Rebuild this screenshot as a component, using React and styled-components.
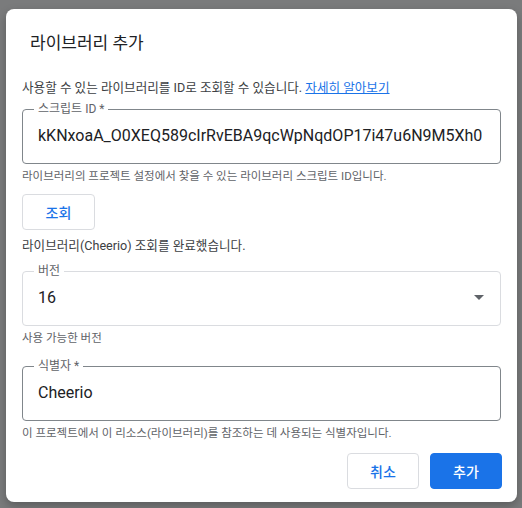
import { createGlobalStyle, styled } from 'styled-components';

const GlobalStyle = createGlobalStyle`
  html, body {
    margin: 0;
    background: #7a7b7c;
  }
  body {
    font-family: Roboto, "Noto Sans CJK KR", sans-serif;
    color: #202124;
  }
  * {
    box-sizing: border-box;
  }
`;

const Backdrop = styled.div`
  width: 522px;
  height: 508px;
  padding: 9px 5px 6px 6px;
`;

const Dialog = styled.div`
  width: 511px;
  height: 493px;
  background: #fff;
  border-radius: 8px;
  box-shadow: 0 4px 10px rgba(0, 0, 0, 0.25);
  padding: 22px 16px 12px;
  display: flex;
  flex-direction: column;
`;

const Title = styled.h2`
  margin: 0 0 25px 8px;
  font-size: 17px;
  line-height: 24px;
  font-weight: 400;
  color: #202124;
`;

const Text = styled.p`
  margin: ${({ $mt }) => $mt || 0}px 0 0;
  font-size: ${({ $size }) => $size || 12.6}px;
  line-height: 16px;
  color: ${({ $muted }) => ($muted ? '#5f6368' : '#3c4043')};
`;

const Link = styled.a`
  color: #1a73e8;
  text-decoration: underline;
`;

const Field = styled.fieldset`
  margin: ${({ $mt }) => $mt}px 0 0;
  padding: 0 15px 8px;
  border: 1px solid ${({ $disabled }) => ($disabled ? '#dadce0' : '#80868b')};
  border-radius: 4px;
  min-width: 0;
`;

const Legend = styled.legend`
  margin-left: -4px;
  padding: 0 4px;
  font-size: 12px;
  line-height: 12px;
  color: #5f6368;
`;

const Row = styled.div`
  height: 40px;
  display: flex;
  align-items: center;
  justify-content: space-between;
`;

const Value = styled.span`
  font-size: 16px;
  color: #202124;
  white-space: nowrap;
`;

const Caret = styled.span`
  width: 0;
  height: 0;
  border-left: 5px solid transparent;
  border-right: 5px solid transparent;
  border-top: 5px solid #5f6368;
  margin-right: 1px;
`;

const Button = styled.button`
  width: ${({ $w }) => $w || 72}px;
  height: 36px;
  border-radius: 4px;
  border: 1px solid ${({ $primary }) => ($primary ? '#1a73e8' : '#dadce0')};
  background: ${({ $primary }) => ($primary ? '#1a73e8' : '#fff')};
  color: ${({ $primary }) => ($primary ? '#fff' : '#1a73e8')};
  font-family: inherit;
  font-size: 14px;
  font-weight: 500;
  padding: 0;
`;

const LookupButton = styled(Button)`
  margin-top: 10px;
  align-self: flex-start;
`;

const Actions = styled.div`
  margin-top: 12px;
  display: flex;
  justify-content: flex-end;
  gap: 11px;
  margin-right: -1px;
`;

export default function App() {
  return (
    <>
      <GlobalStyle />
      <Backdrop>
        <Dialog>
          <Title>라이브러리 추가</Title>
          <Text>
            사용할 수 있는 라이브러리를 ID로 조회할 수 있습니다. <Link href="#">자세히 알아보기</Link>
          </Text>

          <Field $mt={7}>
            <Legend>스크립트 ID *</Legend>
            <Row>
              <Value>kKNxoaA_O0XEQ589cIrRvEBA9qcWpNqdOP17i47u6N9M5Xh0</Value>
            </Row>
          </Field>
          <Text $mt={4} $size={11.5} $muted>
            라이브러리의 프로젝트 설정에서 찾을 수 있는 라이브러리 스크립트 ID입니다.
          </Text>

          <LookupButton $w={73}>조회</LookupButton>
          <Text $mt={8}>라이브러리(Cheerio) 조회를 완료했습니다.</Text>

          <Field $mt={11} $disabled>
            <Legend>버전</Legend>
            <Row>
              <Value>16</Value>
              <Caret />
            </Row>
          </Field>
          <Text $mt={4} $size={11.5} $muted>사용 가능한 버전</Text>

          <Field $mt={14}>
            <Legend>식별자 *</Legend>
            <Row>
              <Value>Cheerio</Value>
            </Row>
          </Field>
          <Text $mt={4} $size={11.5} $muted>
            이 프로젝트에서 이 리소스(라이브러리)를 참조하는 데 사용되는 식별자입니다.
          </Text>

          <Actions>
            <Button>취소</Button>
            <Button $primary>추가</Button>
          </Actions>
        </Dialog>
      </Backdrop>
    </>
  );
}
